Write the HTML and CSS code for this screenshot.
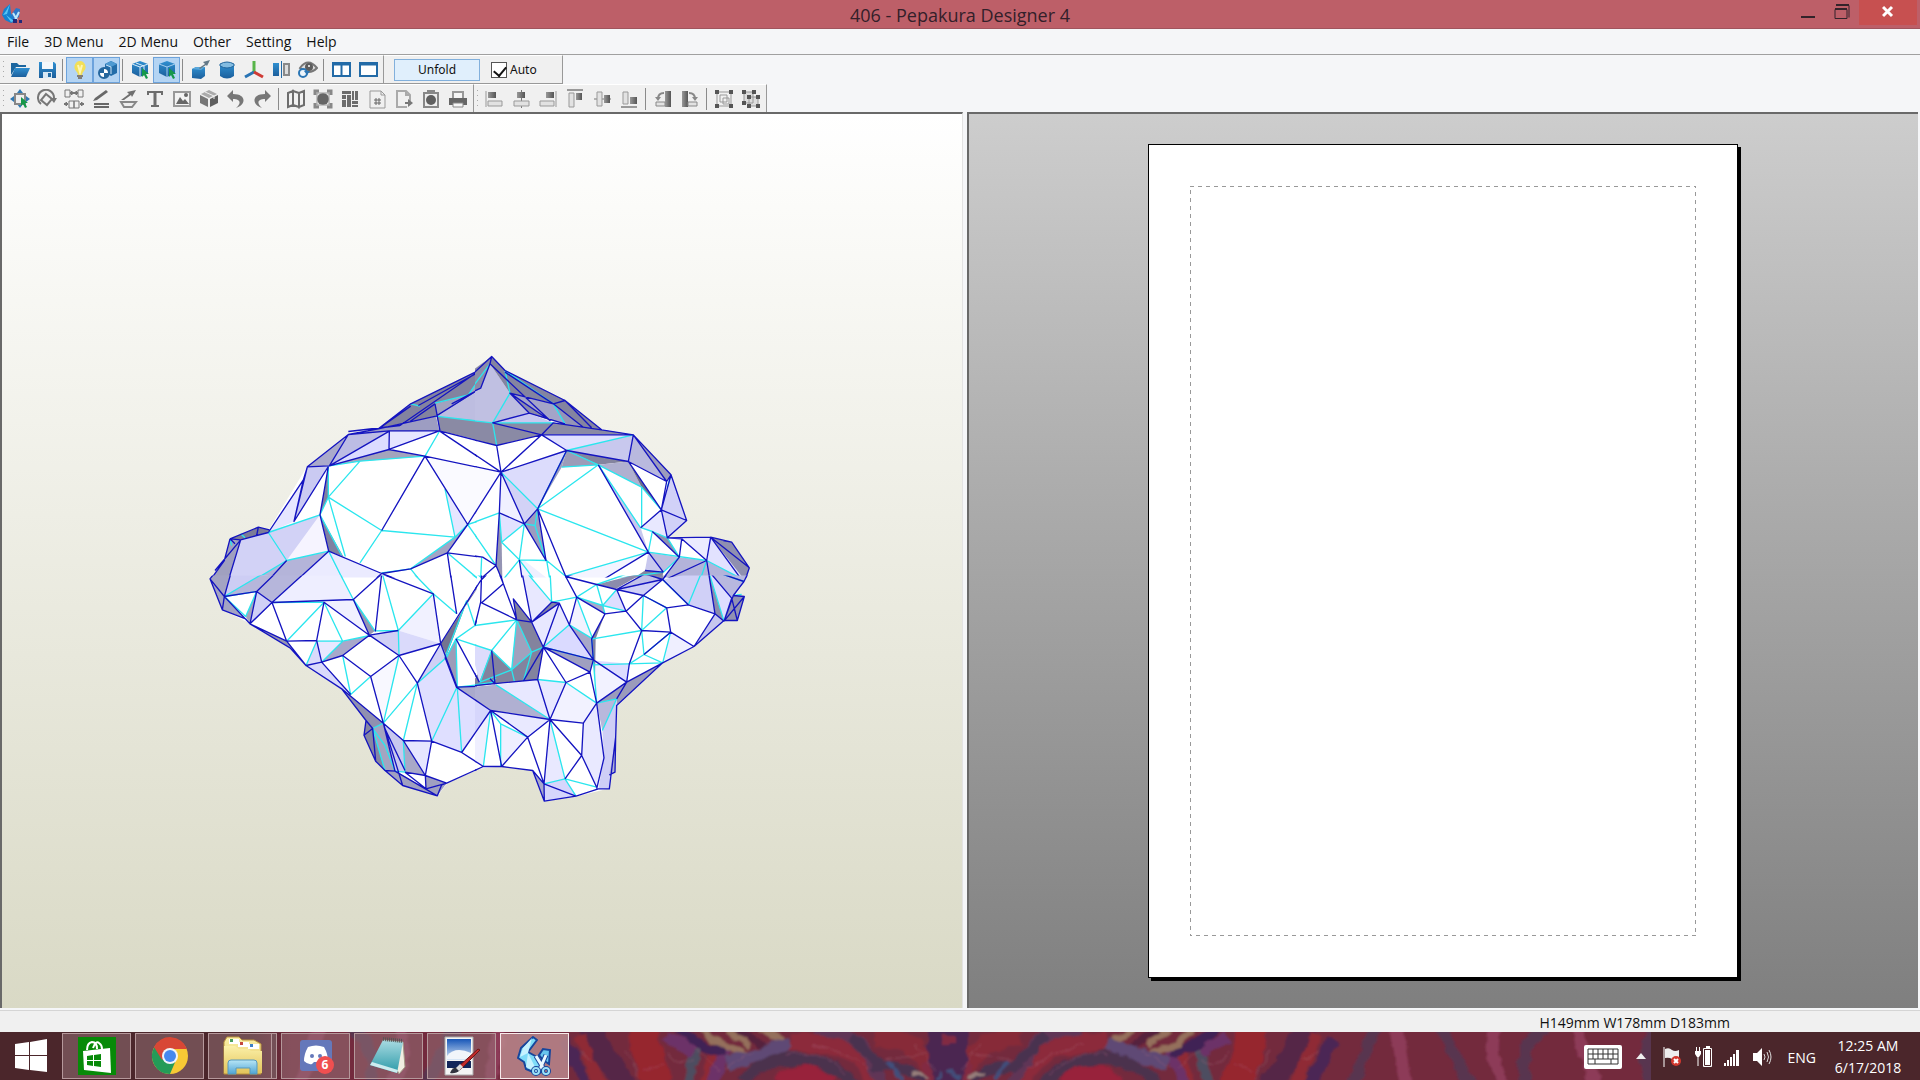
FILE: index.html
```html
<!DOCTYPE html>
<html lang="en">
<head>
  <meta charset="UTF-8" />
  <title>406 - Pepakura Designer 4</title>
  <meta name="viewport" content="width=device-width,initial-scale=1" />
  <link rel="stylesheet" href="styles.css">
</head>
<body>

  <!-- shared gradients and the app logo -->
  <svg class="defs" aria-hidden="true">
    <defs>
      <linearGradient id="blue" x1="0" y1="0" x2="0" y2="1"><stop offset="0" stop-color="#2f8fd0"/><stop offset="1" stop-color="#1c5f9c"/></linearGradient>
      <linearGradient id="gray" x1="0" y1="0" x2="1" y2="0"><stop offset="0" stop-color="#999"/><stop offset="1" stop-color="#555"/></linearGradient>
      <linearGradient id="folder" x1="0" y1="0" x2="0" y2="1"><stop offset="0" stop-color="#fbf0a8"/><stop offset="1" stop-color="#e3c45c"/></linearGradient>
      <linearGradient id="glass" x1="0" y1="0" x2="0" y2="1"><stop offset="0" stop-color="#b8e6f6"/><stop offset="1" stop-color="#4fa4d4"/></linearGradient>
      <linearGradient id="note" x1="0" y1="0" x2="0" y2="1"><stop offset="0" stop-color="#a9dbe2"/><stop offset="1" stop-color="#2c9aa8"/></linearGradient>
      <linearGradient id="sky" x1="0" y1="0" x2="0" y2="1"><stop offset="0" stop-color="#1756b8"/><stop offset="1" stop-color="#dbe9f7"/></linearGradient>
      <symbol id="logo" viewBox="0 0 40 40">
        <path d="M18 1 6 12l-3 10 6 4 2 7 12 5 5-3-6-14-9-5 9-12z" fill="#7edcf8" stroke="#17469c" stroke-width="2" stroke-linejoin="round"/>
        <path d="M17 2 8 12l-3 9 8-4zM13 17l-2 14 12 6z" fill="#c6f3ff"/>
        <path d="m24 19 4-6 7 1-1 14-6-4z" fill="#69c6ee" stroke="#17469c" stroke-width="2"/>
        <path d="m21 20 8 13M31 19l-6 14" stroke="#17469c" stroke-width="5"/>
        <path d="m21 20 8 13M31 19l-6 14" stroke="#eaf8ff" stroke-width="3"/>
        <circle cx="21" cy="35" r="3" fill="none" stroke="#17469c" stroke-width="4"/><circle cx="31" cy="35" r="3" fill="none" stroke="#17469c" stroke-width="4"/>
        <circle cx="21" cy="35" r="3" fill="none" stroke="#9be2f8" stroke-width="2"/><circle cx="31" cy="35" r="3" fill="none" stroke="#9be2f8" stroke-width="2"/>
      </symbol>
      <symbol id="appicon" viewBox="0 0 22 22">
        <path d="M9 1 3 6 1 12l3 5 6 3 5-2-5-7z" fill="#1481d0"/><path d="M9 1 5 8l-3 4 4-1zM5 12l5 7 3-1z" fill="#55c4f4"/>
        <path d="m10 12 5-7 4 1-1 8-5 3z" fill="#2a77c8"/><path d="m12 10 4 7M18 9l-4 8" stroke="#bfe9fa" stroke-width="2"/>
        <path d="M12 16h4v4h-4zM18 17h3v3h-3z" fill="#232a78"/>
      </symbol>
      <symbol id="arrow" viewBox="0 0 8 11"><path d="M0 0v9l2-2 2 4 2-1-2-4h3z" fill="#16984a"/></symbol>
    </defs>
  </svg>

  <header class="titlebar">
    <svg class="title-icon"><use href="#appicon"/></svg>
    <h1 class="title">406 - Pepakura Designer 4</h1>
    <div class="window-buttons">
      <button class="win-btn" aria-label="Minimize"><svg width="14" height="20"><path d="M0 17h14" stroke="#33232a" stroke-width="2"/></svg></button>
      <button class="win-btn" aria-label="Restore"><svg width="16" height="20"><path d="M2 5.500h13v12M1 9.500h12v9H1z" fill="none" stroke="#33232a"/><path d="M2 5h13M1 9h12" stroke="#33232a" stroke-width="2"/></svg></button>
      <button class="win-btn win-close" aria-label="Close"><svg width="12" height="20"><path d="m1 7 9 9M10 7l-9 9" stroke="#fff" stroke-width="3"/></svg></button>
    </div>
  </header>

  <nav class="menubar">
    <button>File</button>
    <button>3D Menu</button>
    <button>2D Menu</button>
    <button>Other</button>
    <button>Setting</button>
    <button>Help</button>
  </nav>

  <div class="toolbars">
    <div class="bar-row">
      <div class="bar">
        <span class="grip"></span>
        <button class="tool" aria-label="Open"><svg><path d="M1 3h6l2 2h7v2H6L1 15z" fill="#1c669f"/><path d="M5 8h15l-4 9H1z" fill="url(#blue)"/></svg></button>
        <button class="tool" aria-label="Save"><svg><path d="M2 2h15l2 2v14H2z" fill="url(#blue)"/><path d="M5 2h11v7H5z" fill="#f4f8fb"/><path d="M6 12h9v6H6z" fill="#d8e8f4"/><path d="M11 13h3v4h-3z" fill="#226aa4"/></svg></button>
        <span class="sep"></span>
        <button class="tool on" aria-label="Light"><svg><path d="M10 1a6 6 0 0 0-4 10q2 2 2 4h4q0-2 2-4a6 6 0 0 0-4-10z" fill="#f2df58"/><path d="M8 5l2 7 2-7" fill="none" stroke="#fdf6b4" stroke-width="2"/><path d="M7 16h6M8 18h4" stroke="#827d78" stroke-width="2"/></svg></button>
        <button class="tool on" aria-label="Texture"><svg><path d="m8 4 6-3 6 3v9l-6 3-6-4z" fill="#236da9"/><path d="m8 4 6-3 6 3-6 3z" fill="#4e9ad2"/><path d="m9 5 5 2v7" fill="none" stroke="#cfe5f6"/><circle cx="7" cy="13" r="5" fill="#fff" stroke="#25679e" stroke-width="2"/><path d="M7 8v5H2a5 5 0 0 1 5-5M7 18v-5h5a5 5 0 0 1-5 5" fill="#25679e"/></svg></button>
        <span class="sep"></span>
        <button class="tool" aria-label="Select"><svg><path d="m10 1 8 3v9l-8 4-8-4V4z" fill="url(#blue)"/><path d="m2 4 8 3 8-3M10 7v10" fill="none" stroke="#dcedf9" stroke-width="1"/><path d="m6 3 8 3v4" stroke="#dcedf9" fill="none"/><use href="#arrow" x="12" y="8" width="8" height="11"/></svg></button>
        <button class="tool on" aria-label="Select face"><svg><path d="m10 1 8 3v9l-8 4-8-4V4z" fill="url(#blue)"/><path d="m2 4 8 3 8-3M10 7v10" fill="none" stroke="#a5cdee" stroke-width="1"/><use href="#arrow" x="12" y="8" width="8" height="11"/></svg></button>
        <span class="sep"></span>
        <button class="tool" aria-label="Move"><svg><path d="m2 9 4-2h9v9l-4 3-9-1z" fill="url(#blue)"/><path d="m2 9 4-2h9l-4 3z" fill="#5aa7da"/><path d="m9 8 6-4-2-2 7-2-3 6-1-1-6 4z" fill="#637988"/></svg></button>
        <button class="tool" aria-label="Cylinder"><svg><path d="M3 4v12q7 5 14 0V4z" fill="url(#blue)"/><path d="M3 4q7-4 14 0v2q-7 4-14 0z" fill="#83bce1" stroke="#21669e"/></svg></button>
        <button class="tool" aria-label="Axes"><svg><path d="M10 1v11" stroke="#58b54a" stroke-width="3"/><path d="m10 12-9 5" stroke="#2873b4" stroke-width="3"/><path d="m10 12 9 5" stroke="#cf3b35" stroke-width="3"/></svg></button>
        <button class="tool" aria-label="Mirror"><svg><path d="M2 3h6v13H2z" fill="url(#blue)"/><path d="M10.500 1v17" stroke="#236ba7"/><path d="M13 4h5v11h-5z" fill="#ddd" stroke="#8a8a8a" stroke-width="2"/></svg></button>
        <button class="tool" aria-label="View"><svg><path d="M2 8q8-11 17 0-8 8-17 0z" fill="#ddd" stroke="#777" stroke-width="2"/><circle cx="11" cy="7" r="4" fill="#5d5d5d"/><circle cx="11" cy="6" r="1" fill="#fff"/><circle cx="5" cy="13" r="4" fill="#eef6fc" stroke="#2b76b5" stroke-width="2"/><path d="m6 11h6l-3 4z" fill="#2b76b5"/></svg></button>
        <span class="sep"></span>
        <button class="tool" aria-label="Two panes"><svg><path d="M2 3h17v13H2zM10.500 3v13" fill="#fff" stroke="#236ba7" stroke-width="2"/><path d="M1 4h19" stroke="#236ba7" stroke-width="3"/></svg></button>
        <button class="tool" aria-label="One pane"><svg><path d="M2 3h17v13H2z" fill="#fff" stroke="#236ba7" stroke-width="2"/><path d="M1 4h19" stroke="#236ba7" stroke-width="3"/></svg></button>
      </div>
      <div class="bar bar-unfold">
        <button class="unfold">Unfold</button>
        <input type="checkbox" id="auto" class="check" checked>
        <label for="auto">Auto</label>
      </div>
    </div>
    <div class="bar-row bar-row-2">
      <div class="bar">
        <span class="grip"></span>
        <button class="tool" aria-label="Select and move"><svg><path d="m10 0 3 4H7zM0 10l4-3v6zM20 10l-4-3v6zM10 19l-3-4h6z" fill="#2e78b3"/><path d="M5 5h10v10H5z" fill="#eee" stroke="#888" stroke-width="2"/><use href="#arrow" x="11" y="8" width="8" height="11"/></svg></button>
        <button class="tool" aria-label="Rotate"><svg fill="none" stroke="#777" stroke-width="2"><path d="M4 15A8 8 0 1 1 17 9"/><path d="m9 5 6 5-5 6-6-5z"/><path d="m13 9 4 5 3-5z" fill="#777" stroke="none"/></svg></button>
        <button class="tool" aria-label="Join"><svg fill="none" stroke="#777"><path d="M1 1h5v7H1zM14 1h5v7h-5zM5 12h5v7H5zM10 12h5v7h-5z"/><path d="M7 4h6M0 15h4M16 15h4" stroke-width="2"/><path d="m8 2-2 2 2 2zM12 2l2 2-2 2zM2 13l2 2-2 2zM18 13l-2 2 2 2z" fill="#777"/></svg></button>
        <button class="tool" aria-label="Edge color"><svg><path d="m2 12 2-3L15 1l2 2L6 11z" fill="#686868"/><path d="M3 15h15M3 18h15" stroke="#686868" stroke-width="2"/></svg></button>
        <button class="tool" aria-label="Flaps"><svg><path d="m3 11 8-6-2-2 9-2-4 7-1-2-7 5z" fill="#6f6f6f"/><path d="M3 13h15l-4 5H6z" fill="#eee" stroke="#888" stroke-width="2"/></svg></button>
        <button class="tool" aria-label="Text"><svg><path d="M3 6V3h14v3M6 17h8" fill="none" stroke="#6d6d6d" stroke-width="2"/><path d="M10 3v14" stroke="#6d6d6d" stroke-width="3"/></svg></button>
        <button class="tool" aria-label="Image"><svg><path d="M2 3h16v14H2z" fill="#f3f3f3" stroke="#999" stroke-width="2"/><path d="m4 15 4-7 3 4 2-2 4 5z" fill="#666"/><circle cx="14" cy="6" r="2" fill="#666"/></svg></button>
        <button class="tool" aria-label="Cube"><svg><path d="m10 1 8 4-8 4-8-4z" fill="#aaa"/><path d="m1 6 8 4v8l-8-4z" fill="#777"/><path d="m19 6-8 4v8l8-4z" fill="#5f5f5f"/><path d="m6 3 9 4v3" fill="none" stroke="#eee"/></svg></button>
        <button class="tool" aria-label="Undo"><svg><path d="m1 7 6-6v4c14 0 13 11 3 14 6-5 4-9-3-9v3z" fill="#777"/></svg></button>
        <button class="tool" aria-label="Redo"><svg><path d="m18 7-6-6v4C-2 5-1 16 9 19c-6-5-4-9 3-9v3z" fill="#777"/></svg></button>
        <span class="sep"></span>
        <button class="tool" aria-label="Unfold map"><svg fill="#f1f1f1" stroke="#6d6d6d" stroke-width="2"><path d="m2 4 5-2v14l-5 2zM7 2l6 2v14l-6-2zM13 4l5-2v14l-5 2z"/></svg></button>
        <button class="tool" aria-label="Fit"><svg><circle cx="10" cy="10" r="6" fill="#666"/><path d="M4 4h12v12H4z" fill="none" stroke="#999"/><path d="M2 6V2h4M14 2h4v4M18 14v4h-4M6 18H2v-4" fill="none" stroke="#888" stroke-width="3"/></svg></button>
        <button class="tool" aria-label="Layout"><svg fill="#6c6c6c"><path d="M2 2h9v3H2zM2 6h4v4H2zM7 6h4v12H7zM12 2h2v9h-2zM15 2h3v9h-3zM2 11h4v7H2zM12 12h6v3h-6zM12 16h6v2h-6z"/></svg></button>
        <button class="tool" aria-label="Number"><svg fill="none" stroke="#999"><path d="M3 2h11l4 4v13H3zM14 2v4h4" stroke-width="1"/><path d="M9 9v7M12 9v7M7 11h7M7 14h7" stroke="#666"/></svg></button>
        <button class="tool" aria-label="Export"><svg><path d="M13 18H3V2h9l4 4v6M12 2v4h4" fill="none" stroke="#aaa" stroke-width="2"/><path d="M11 13h3v-3l5 4-5 4v-3h-3z" fill="#777"/></svg></button>
        <button class="tool" aria-label="Capture"><svg><path d="M3 4h14v14H3z" fill="#eee" stroke="#888" stroke-width="2"/><path d="M6 1h8v4H6z" fill="#888"/><circle cx="10" cy="11" r="5" fill="#5f5f5f"/></svg></button>
        <button class="tool" aria-label="Print"><svg><path d="M5 3h10v7H5z" fill="#f6f6f6" stroke="#999" stroke-width="2"/><path d="M1 9h18v7H1z" fill="#666"/><path d="M5 14h10v4H5z" fill="#f6f6f6" stroke="#888"/></svg></button>
      </div>
      <div class="bar bar-align">
        <span class="grip"></span>
        <button class="tool" aria-label="Align left"><svg><path d="M2 2v16" stroke="#999"/><path d="M4 3h8v6H4z" fill="url(#gray)"/><path d="M4 12h14v5H4z" fill="#e2e2e2" stroke="#999"/></svg></button>
        <button class="tool" aria-label="Align center"><svg><path d="M10.500 1v18" stroke="#777"/><path d="M6 3h8v6H6z" fill="url(#gray)"/><path d="M3 12h15v5H3z" fill="#e2e2e2" stroke="#999"/></svg></button>
        <button class="tool" aria-label="Align right"><svg><path d="M18 2v16" stroke="#999"/><path d="M8 3h8v6H8z" fill="url(#gray)"/><path d="M2 12h14v5H2z" fill="#e2e2e2" stroke="#999"/></svg></button>
        <button class="tool" aria-label="Align top"><svg><path d="M2 1h16" stroke="#999" stroke-width="2"/><path d="M11 4h6v7h-6z" fill="url(#gray)"/><path d="M4 4h5v14H4z" fill="#e2e2e2" stroke="#999"/></svg></button>
        <button class="tool" aria-label="Align middle"><svg><path d="M2 10h17" stroke="#777"/><path d="M12 6h6v8h-6z" fill="url(#gray)"/><path d="M5 3h5v14H5z" fill="#e2e2e2" stroke="#999"/></svg></button>
        <button class="tool" aria-label="Align bottom"><svg><path d="M2 18h16" stroke="#999" stroke-width="2"/><path d="M11 8h7v7h-7z" fill="url(#gray)"/><path d="M4 3h5v12H4z" fill="#e2e2e2" stroke="#999"/></svg></button>
        <span class="sep"></span>
        <button class="tool" aria-label="Rotate left"><svg><path d="M12 2h6v16h-6z" fill="url(#gray)"/><path d="M3 13h9v4H3z" fill="#e2e2e2" stroke="#888"/><path d="M11 4q-6 0-6 6" fill="none" stroke="#888" stroke-width="2"/><path d="M2 8h6l-3 4z" fill="#888"/></svg></button>
        <button class="tool" aria-label="Rotate right"><svg><path d="M2 2h6v16H2z" fill="url(#gray)"/><path d="M8 13h9v4H8z" fill="#e2e2e2" stroke="#888"/><path d="M9 4q6 0 6 6" fill="none" stroke="#888" stroke-width="2"/><path d="M12 8h6l-3 4z" fill="#888"/></svg></button>
        <span class="sep"></span>
        <button class="tool" aria-label="Group"><svg><path d="M3 3h14v14H3zM6 6h7v7H6zM9 9h6v6H9z" fill="none" stroke="#999"/><path d="M1 1h4v4H1zM15 1h4v4h-4zM1 15h4v4H1zM15 15h4v4h-4z" fill="#555"/></svg></button>
        <button class="tool" aria-label="Ungroup"><svg><path d="M3 3h9v11H3zM8 8h9v9H8z" fill="#ddd" stroke="#999"/><path d="M1 1h4v4H1zM11 1h4v4h-4zM1 12h4v4H1zM6 6h4v4H6zM15 6h4v4h-4zM6 15h4v4H6zM15 15h4v4h-4z" fill="#555"/></svg></button>
      </div>
    </div>
  </div>

  <main class="panes">
    <section class="pane pane-3d">
      <svg class="model" viewBox="2 114 960 893" role="img" aria-label="3D model">
        <!-- each quarter of the mesh is kept inside its own quarter, with a small overlap so no seam shows -->
        <clipPath id="clip-ul"><path d="M-90-90H831V711H-90z"/></clipPath>
        <clipPath id="clip-ur"><path d="M15-90H990V711H15z"/></clipPath>
        <clipPath id="clip-ll"><path d="M-90 15H831V900H-90z"/></clipPath>
        <clipPath id="clip-lr"><path d="M15 15H990V900H15z"/></clipPath>

        <path fill="#fff" d="M492 356 505 370 564 399 600 428 634 434 670 474 687 520 668 537 711 537 732 542 749 567 745 581 736 594 745 596 738 620 724 621 694 646 664 662 617 706 613 771 609 788 576 796 544 801 532 770 501 766 480 768 447 783 438 795 403 785 375 760 365 735 367 720 341 688 306 665 290 648 250 623 222 609 211 578 224 560 230 538 258 527 269 529 307 466 348 433 378 428 410 403 480 369z"/>

        <!-- upper left -->
        <g class="part" transform="translate(200 340) scale(.33333)" clip-path="url(#clip-ul)">
          <path fill="#83839f" d="M860 78 632 190 535 265 710 227 860 135z"/>
          <path fill="#a2a2be" d="M705 190 805 163 860 78V135L710 227z"/>
          <path fill="#bdbde0" d="M710 227 860 135V242z"/>
          <path fill="#8a8aa4" d="M710 227 860 242V305L720 271z"/>
          <path fill="#9d9dc2" d="M535 265 708 227 718 271 445 282z"/>
          <path fill="#bcbce4" d="M445 282 568 272 388 376z"/>
          <path fill="#aaaacb" d="M445 282 388 376 322 379z"/>
          <path fill="#e5e5ff" d="M568 272H718L567 327z"/>
          <path fill="#dcdcff" d="M568 272 567 327 388 376z"/>
          <path fill="#a4a4bc" d="M567 327 675 347 480 362 388 376z"/>
          <path fill="#cacaf2" d="M322 379 385 378 282 543z"/>
          <path fill="#8080a0" d="M385 378V470L360 523zM360 523 430 648 386 632z"/>
          <path fill="#e6e6ff" d="M310 418 282 543 205 576zM735 447 803 552 765 590z"/>
          <path fill="#d2d2f6" d="M122 598 205 576 360 523 386 632 260 660 160 720H85z"/>
          <path fill="#f6f4ff" d="M360 523 386 632 260 660z"/>
          <path fill="#b4b4d9" d="M260 660 386 632 290 720H160z"/>
          <path fill="#ebebff" d="M386 632 545 699 540 720H290z"/>
          <path fill="#7c7c98" d="M90 595 175 560 208 568 205 576 122 598z"/>
          <path fill="#a0a0bf" d="M90 595 122 598 85 720H30L73 660z"/>
          <path fill="#fafaff" d="M675 347 840 380V495L803 552 735 445z"/>
          <path fill="#a4a4c4" d="M803 552 742 637 632 685 765 590z"/>
          <path class="cyan" d="M705 188 805 163 870 70M708 227 878 247M718 273 675 347 480 362 388 376M480 362 385 470V378M385 470 545 570 765 590 735 445M385 470 360 523 205 576 260 660 386 632 430 720M160 720 260 660M385 470 436 648M360 523 425 645M545 570 480 667M765 590 632 685 545 697M803 552 840 540M803 552 888 673M765 590 803 552M632 685 660 720M742 637 840 720M122 580 135 592M90 595 95 615M632 190 660 197"/>
          <path d="M860 78 632 190 535 265 445 282 322 379 282 543 385 378 360 523 386 632 545 699 632 685 742 637 803 552 675 347 545 570M845 90 655 195M860 75 600 255M632 197 535 265 708 227 842 143M755 190 840 145M705 190 720 271H568L445 282 388 376 322 379M568 272 567 327 388 376 568 272M718 271 567 327 675 347 903 395M718 271 903 395M718 271 890 315M705 190 630 243M445 273 600 255M310 418 205 576M310 418 282 543M803 552 903 395M742 637 845 650M742 637 754 720M545 699 525 717M545 699 595 718M90 595 175 560 208 568M90 595 122 598 205 576M122 598 85 720M90 595 73 660 30 720M122 598 45 690M175 560 170 585M90 595 105 610M260 660 205 720M386 632 290 720M310 418 322 379"/>
        </g>

        <!-- upper right -->
        <g class="part" transform="translate(470 340) scale(.33333)" clip-path="url(#clip-ur)">
          <path fill="#8c8ca8" d="M0 95 65 48 60 70 32 143 0 155z"/>
          <path fill="#c0c0e2" d="M60 70 120 158 68 247 0 240V155L32 143z"/>
          <path fill="#8484a0" d="M65 48 105 90 120 158 60 70zM105 90 285 180 250 190 120 158zM285 180 395 268 340 260 250 190z"/>
          <path fill="#9595b6" d="M250 190 340 260 285 252z"/>
          <path fill="#a4a4c8" d="M120 158 250 190 285 250 240 240z"/>
          <path fill="#8a8aaa" d="M120 158 178 218 240 240z"/>
          <path fill="#bcbce0" d="M120 158 178 218 68 247z"/>
          <path fill="#c8c8f0" d="M68 247 178 218 250 247z"/>
          <path fill="#8a8aa5" d="M0 240 68 247 250 247 395 268 490 283H215L80 315 0 295z"/>
          <path fill="#e0e0ff" d="M215 283H490L290 330z"/>
          <path fill="#c8c8ee" d="M490 283 475 363 290 330z"/>
          <path fill="#84849e" d="M290 330 475 363 385 373z"/>
          <path fill="#9c9cb8" d="M290 330 385 373 275 380z"/>
          <path fill="#b0b0d0" d="M385 373 475 363 515 440z"/>
          <path fill="#b9b9de" d="M490 283 590 423 475 363z"/>
          <path fill="#9c9cbc" d="M490 283 603 403 590 423z"/>
          <path fill="#6e6e8c" d="M475 363 574 508 515 440z"/>
          <path fill="#d1d1f8" d="M603 403 650 540 592 592 574 508z"/>
          <path fill="#e8e8ff" d="M574 508 592 592 512 562z"/>
          <path fill="#dcdcfc" d="M93 395 290 330 203 505z"/>
          <path fill="#d2d2f6" d="M93 395 203 505 163 550z"/>
          <path fill="#f0f0ff" d="M93 395 163 550 88 517zM148 658 163 660 240 720H155z"/>
          <path fill="#fafaff" d="M93 395 0 545V375z"/>
          <path fill="#9c9cc0" d="M290 330 275 380 203 505zM203 505 228 660 163 550z"/>
          <path fill="#9494b4" d="M88 517 95 605 97 720 78 675z"/>
          <path fill="#e2e2ff" d="M88 517 163 550 95 605zM722 590 825 720 710 660z"/>
          <path fill="#c8c8ee" d="M385 373 512 562 535 635zM535 635 580 695 525 690z"/>
          <path fill="#9090b0" d="M547 573 592 592 628 650z"/>
          <path fill="#ebebff" d="M635 595 722 590 710 660z"/>
          <path fill="#8f8fb0" d="M722 590 785 605 838 682 825 720z"/>
          <path fill="#bcbce0" d="M535 635 628 650 580 695z"/>
          <path fill="#b3b3da" d="M628 650 710 660 825 720H575z"/>
          <path fill="#f4f4ff" d="M535 635 395 720 287 707z"/>
          <path fill="#84849e" d="M525 690 580 695 575 720H480z"/>
          <path class="cyan" d="M0 150 60 70M105 90 120 158 68 247 80 315M105 90 250 190 285 250M0 240 68 247H250M290 330 490 283M290 330 385 373 275 380M385 373 515 440V562L547 573 535 635 287 707 230 660 148 658 195 720M385 373 203 505 535 635 710 660 825 720M93 395 203 505M203 505 195 555 163 550 95 605 148 658 97 720M-7 552 88 517 95 605M-7 552 78 675M163 550 148 658M230 660 240 720M547 573 592 592 628 650M385 373 512 562M603 403 592 440M574 508 515 440M628 650 580 695 400 720M710 660 690 720M35 650 32 715M195 555 228 660M290 330 203 505"/>
          <path d="M0 108 65 48 105 90 285 180 395 268 490 283 603 403 650 540 592 592 722 590 785 605 838 682 825 720M65 48 60 70 32 143 0 158M60 70 240 240 120 158 178 218 68 247 215 283 250 247 395 268M120 158 250 190 285 180 365 262M250 190 340 260M105 95 250 190M178 218 285 250M215 283H490L475 363 290 330 215 283 93 395 80 315 215 283M80 315 0 295M93 395-92 271M93 395-10 373M93 395-7 552M93 395 88 517 78 675 97 720M93 395 163 550 88 517M93 395 290 330 203 505 163 550 228 660 203 505 287 707M385 373 535 635 580 695M475 363 590 423 574 508 475 363M490 283 590 423 603 403 574 508 650 540M574 508 592 592M574 508 512 562M547 573 628 650 635 595 592 592M635 595 710 660 722 590 838 682M722 590 815 718M785 605 760 600M148 658 157 720M78 675 38 650 0 645M78 675 32 715M710 660 720 720M710 660 580 720M628 650 575 720M535 635 395 720M525 690 580 695M287 707 290 720"/>
        </g>

        <!-- lower left -->
        <g class="part" transform="translate(200 570) scale(.33333)" clip-path="url(#clip-ll)">
          <path fill="#a3a3c3" d="M30 25 50 0H95L73 78 137 145 67 118z"/>
          <path fill="#cdcdf4" d="M95 0H235L73 78z"/>
          <path fill="#b6b6db" d="M73 78 205 0H322L216 96 170 63z"/>
          <path fill="#eeeeff" d="M322 0H415L460 87 216 96z"/>
          <path fill="#d0d0f6" d="M170 63 216 96 150 160z"/>
          <path fill="#a4a4bc" d="M170 63 150 160 137 138z"/>
          <path fill="#f1f1ff" d="M372 95 460 87 508 194zM700 70 722 219 595 180z"/>
          <path fill="#9696b0" d="M460 87 525 181 508 194zM150 160 260 212 318 285 270 230z"/>
          <path fill="#dadafb" d="M350 210 318 285 365 275zM318 285 365 275 452 372 425 355zM595 180 722 219 597 255z"/>
          <path fill="#e8e8ff" d="M350 210H428L365 275z"/>
          <path fill="#a8a8ca" d="M428 212 510 195 428 255 365 275z"/>
          <path fill="#d0d0f5" d="M508 194 595 180 597 255zM722 219 740 260 652 338z"/>
          <path fill="#f8f8ff" d="M512 318 597 255 550 458z"/>
          <path fill="#dfdfff" d="M652 338 740 260 770 352 840 400V460L785 546 695 512z"/>
          <path fill="#aaaacc" d="M770 350 840 345V398z"/>
          <path fill="#747490" d="M722 219 838 45 800 95 740 255z"/>
          <path fill="#9c9cb8" d="M768 205 740 255 722 219 772 352z"/>
          <path fill="#9090b0" d="M425 355 550 458 518 474 498 450z"/>
          <path fill="#8686a2" d="M498 450 518 474 555 600 527 572 492 494z"/>
          <path fill="#a4a4c0" d="M518 474 550 458 585 602 555 600z"/>
          <path fill="#c8c8ee" d="M550 458 610 510 615 605 585 602z"/>
          <path fill="#a8a8c8" d="M610 510 676 615 615 605z"/>
          <path fill="#e6e6ff" d="M610 510H695L676 615z"/>
          <path fill="#a0a0c0" d="M555 600 590 603 678 655 676 615 740 638 712 676 608 645z"/>
          <path class="cyan" d="M415 0 460 87M205 0 73 78 170 63 137 138 73 78M372 95 260 212M216 96 372 95 428 212H350L318 285M428 212 365 275M460 87 525 181 595 180 547 10M595 180 700 70 632 0M700 70 770 130M595 180 597 255 550 458 652 338 610 510 615 605M428 255 452 372 512 318M652 338 740 260 768 205 825 165M768 205 772 352 785 546M770 352 695 512M800 90 735 260M768 205 875 240M800 90 825 165M842 30 800 0M550 458 518 474 555 600M518 474 555 525 585 602 615 605M428 212 510 195M772 350 840 342"/>
          <path d="M50 0 30 25 67 118 137 145 150 160 270 232 318 285 425 355 498 450 492 494 527 572 555 600 608 645 712 676 725 643 740 638 850 588M95 0 73 78 30 25M73 78 67 118M73 78 150 160 170 63 73 78M170 63 235 0M170 63 216 96 322 0M216 96 460 87 545 10 700 70 722 219 597 255 512 318 428 255 365 275 318 285 260 212 350 210 372 95M216 96 260 212 150 160M216 96 150 160M350 210 365 275 452 372M372 95 508 194 460 87M545 10 526 183M508 194 595 180M508 194 597 255 652 338 722 219 842 30M508 194 428 255M512 318 550 458 425 355M652 338 695 512 610 510 550 458M695 512 785 546 872 420M785 546 850 588M695 512 676 615 610 510M722 219 772 352 872 420M770 352 735 260M772 350 840 347M768 205 838 335M770 130 750 0M825 165 845 97M550 458 608 645M550 458 585 602 555 600M585 602 712 676M615 605 676 615 740 638 678 655 676 615M498 450 518 474 492 494M518 474 527 572M555 475 615 600M615 605 678 655"/>
        </g>

        <!-- lower right -->
        <g class="part" transform="translate(470 570) scale(.33333)" clip-path="url(#clip-lr)">
          <path fill="#83839e" d="M130 85 185 155 220 230 203 327 75 340 0 350 65 240 125 298 140 148z"/>
          <path fill="#a1a1bd" d="M140 148 185 245 125 298z"/>
          <path fill="#dcdcfc" d="M0 220 65 240 28 335z"/>
          <path fill="#b0b0d2" d="M0 350 78 343 240 447 62 420 0 378z"/>
          <path fill="#e8e8ff" d="M78 343 203 327 288 336 240 447zM185 155 268 98 298 163 220 230zM155 0H165L245 95 185 155z"/>
          <path fill="#a0a0c0" d="M220 230 370 268 360 305z"/>
          <path fill="#dadaff" d="M220 230 298 163 370 268z"/>
          <path fill="#8484a4" d="M185 155 245 95 268 98z"/>
          <path fill="#f2f2ff" d="M298 163 320 80 368 205zM370 270 470 335 380 398zM288 336 380 398 340 458 240 447z"/>
          <path fill="#a8a8c8" d="M298 163 368 205 370 268zM320 80 398 105 405 130z"/>
          <path fill="#8080a0" d="M405 130 377 205 375 330 380 398 365 205z"/>
          <path fill="#dcdcff" d="M370 270 478 280 470 335z"/>
          <path fill="#9b9bbb" d="M470 335 578 277 440 405V385L380 398z"/>
          <path fill="#b8b8dc" d="M380 398 440 385 397 480z"/>
          <path fill="#cfcff6" d="M440 385 437 500 418 655H385L402 562 397 480z"/>
          <path fill="#b0b0d4" d="M437 500 435 605 418 613z"/>
          <path fill="#e9e9ff" d="M380 398 402 562 380 650 335 555 340 458zM240 447 285 625 222 640zM62 420 240 447 173 500z"/>
          <path fill="#d6d6fc" d="M222 640 285 625 318 677 223 692zM0 378 62 420 0 508z"/>
          <path fill="#a8a8cc" d="M188 600 222 640 223 692z"/>
          <path fill="#efefff" d="M92 460 173 500 95 588zM62 420 40 588 0 565V508zM602 185 672 228 578 277z"/>
          <path fill="#c6c6ee" d="M735 130 762 152 672 228z"/>
          <path fill="#d0d0f7" d="M578 27 700 0H715L735 130 655 103zM440 57 578 27 520 75z"/>
          <path fill="#8c8cac" d="M715 0 762 152 735 130zM380 42 525 5 438 55zM490 0H585L578 27 525 10z"/>
          <path fill="#dedeff" d="M715 0 785 83 762 152zM440 57 398 105 468 122z"/>
          <path fill="#b8b8df" d="M715 0H838L822 33 785 83z"/>
          <path fill="#9292b2" d="M790 75 823 78 802 150 762 152z"/>
          <path fill="#c0c0e8" d="M438 55 525 10 578 27z"/>
          <path class="cyan" d="M165 0 245 95 320 80 368 205 298 163 220 230 370 268 380 398 288 336 203 327M240 0 245 95M320 80 398 105 468 122M320 80 380 42 398 105 440 57M380 42 500 0M520 75 515 180 590 112 520 75M515 180 368 205M515 180 522 252 578 277 602 185 522 252 478 280M370 283 578 277M578 27 655 103 697 0M715 0 762 152M725 0 822 33M-42 205 15 165 140 148 65 240-42 205M140 148 185 245 125 298 30 335 65 240 125 298 140 148M185 245 220 230M185 245 160 332M125 298 133 332M78 343 240 447 285 625 222 640M78 322 60 342M62 420 40 588M62 420 92 460 173 500M92 460V588M285 625 380 650M285 625 318 677M380 398 440 385 397 480M0 345 75 335M-10 90 15 165M0-7 35 22M365 205 370 268 375 330M398 105 405 130M790 75 815 72"/>
          <path d="M838 0 822 33 790 75 823 78 802 150H762L672 228 578 277 440 405 437 500 418 655H385L318 677 223 692 188 600 95 588H40L-70 638M78-15 32 30-88 219M35 0 32 95 15 165M78-15 100 40 140 148 185 155 155 0M100 40 35 97 140 148M100 40 88 0M140 148 130 85 185 155 268 98 220 230 185 155 245 95 268 98 298 163 370 268 360 305 220 230 370 268 470 335 380 398 402 562 380 655M220 230 203 327-38 350M203 327 240 447 173 500 62 420 95 588 173 500 222 640 240 447 62 420-38 352M220 230 160 332M220 230 288 336 360 305 380 398 340 458 240 447 288 336M240 447 335 555 340 458M335 555 380 650M335 555 285 625M222 640 318 677M222 640 223 692M188 600 222 640M62 420-25 546 40 588M65 240 75 340 60 325M298 163 320 80 405 130 468 122 515 180 478 280 470 335 578 277M405 130 365 205 370 268M515 180 602 185 672 228M602 185 590 112 655 103 735 130 672 228M602 185 522 252M590 112 520 75 440 57 468 122 520 75 578 27 655 103M290 0 287 18 380 42 440 57 578 27 600 0M287 18 320 80M287 18 350 0M440 57 525 10 578 27M715 0 735 130 762 152 785 83 715 0M725 0 822 33M785 83 802 150M790 75 762 152 823 78M437 500 435 605 418 613M-42 205 28 335M470 335 440 385"/>
        </g>
      </svg>
    </section>
    <section class="pane pane-2d">
      <div class="sheet"><svg class="margin"><rect width="100%" height="100%"/></svg></div>
    </section>
  </main>

  <footer class="status"><span>H149mm W178mm D183mm</span></footer>

  <div class="taskbar">
    <svg class="wallpaper" viewBox="0 0 1920 48" preserveAspectRatio="xMidYMid slice" aria-hidden="true">
      <defs>
        <filter id="paint" x="0" y="0" width="100%" height="100%">
          <feTurbulence type="fractalNoise" baseFrequency=".06 .08" numOctaves="3" seed="4" result="n"/>
          <feDisplacementMap in="SourceGraphic" in2="n" scale="9" xChannelSelector="R" yChannelSelector="G"/>
          <feGaussianBlur stdDeviation="1"/>
        </filter>
        <g id="half">
          <path fill="#732a3d" d="M200-10h749v70H200z"/>
          <g fill="none" stroke-width="12">
            <path stroke="#583450" d="M240-5q20 30 0 60M350-5q30 20 20 60M455-5l-30 60M520-5l25 60"/>
            <path stroke="#8d3a58" d="M300 55 320-5M400-5q10 30-10 60M490 55 500-5"/>
            <path stroke="#542647" stroke-width="22" d="M590-5 602 20 628 55"/>
            <path stroke="#4b2554" stroke-width="12" d="M563 8 588 55"/>
            <path stroke="#96252f" stroke-width="30" d="M645-5q-2 30 18 60"/>
            <path stroke="#8f2a34" stroke-width="12" d="M580 4l21 50M718 15l-14 40"/>
            <path stroke="#4e4e60" stroke-width="10" d="M697 15 688 55"/>
            <path stroke="#6c3368" d="M668 5l27 14M710 55l16-38"/>
            <path stroke="#412154" stroke-width="10" d="M680-3q20 20 46 23"/>
            <path stroke="#94705c" stroke-width="7" d="M703-3q15 18 42 25M727-3l22 17M762-3l25 14"/>
            <path stroke="#55203c" stroke-width="7" d="M737-3l28 18"/>
            <path stroke="#5e4a74" stroke-width="14" d="M728 32 790 12"/>
            <path stroke="#4c304d" stroke-width="12" d="M742 50q15-20 50-24 40-2 62 30"/>
            <path stroke="#98223a" stroke-width="18" d="M779 53q25-22 52 0"/>
            <path stroke="#8c2a3a" stroke-width="18" d="M790 10q76-2 85 45"/>
            <path stroke="#613656" d="M815-3q48 3 56 33l14 25"/>
            <path stroke="#872a37" stroke-width="20" d="M875 4q38 2 57 30"/>
            <path stroke="#493150" stroke-width="10" d="M873 32q50 6 55 22M850 4l35 32"/>
            <path stroke="#4c2851" stroke-width="26" d="M941-5v60"/>
            <path stroke="#434f7c" stroke-width="4" d="M888 30l15 18M937 46l10-8"/>
            <path stroke="#822a42" stroke-width="8" d="M926 30l5 25M942 8h12"/>
            <path stroke="#98807c" stroke-width="3" d="M910 42l10-2 8 7"/>
          </g>
          <g fill="none" stroke="#ad6680" opacity=".4">
            <path d="M578 20l16 8M626 18l15 30M667 20q9 18 27 8M694 14l25 24M725 35l28-15M788 24q33-10 59 20M812 12q40 10 56 25M884 28l42-6M915 12l20 26M643 40l20-10"/>
          </g>
        </g>
      </defs>
      <g filter="url(#paint)">
        <use href="#half"/>
        <use href="#half" transform="translate(1896 0) scale(-1 1)"/>
      </g>
    </svg>
    <button class="start" aria-label="Start"><svg width="32" height="34"><path d="m0 5 14-2v13H0zM15 3 32 0v16H15zM0 17h14v14L0 29zM15 17h17v16l-17-2z" fill="#fff"/></svg></button>
    <div class="apps">
      <button class="app" aria-label="Store"><svg viewBox="0 0 40 40"><path d="M1 1h38v38H1z" fill="#078a08"/><path d="m6 15 27-3 1 25-27-3z" fill="#fff"/><path d="M10 14q0-7 5-8 5 0 5 7M16 12q3-8 6-5 3 2 3 6" fill="none" stroke="#fff" stroke-width="2"/><path d="m10 20 6-1v5h-6zM17 19l7-1v6h-7zM10 25h6v5l-6-1zM17 25h7v6l-7-1z" fill="#078a08"/></svg></button>
      <button class="app" aria-label="Chrome"><svg viewBox="0 0 40 40"><circle cx="20" cy="20" r="18" fill="#f7c935"/><path d="M20 20 5 10A18 18 0 0 0 20 38l6-14z" fill="#249b58"/><path d="M4 11A18 18 0 0 1 37 13H20l-8 11z" fill="#d84735"/><circle cx="20" cy="20" r="8" fill="#f1f4f8"/><circle cx="20" cy="20" r="6" fill="#4688ee"/></svg></button>
      <button class="app stacked" aria-label="File Explorer"><svg viewBox="0 0 40 40"><path d="M1 6 4 1h12l3 3h12l7 4v30H1z" fill="url(#folder)" stroke="#b9923d"/><path d="M6 3h10v5H6zM15 6h11v5H15zM25 8h11v5H25z" fill="#fff"/><path d="M7 3h3v3H7z" fill="#4b9e5c"/><path d="M17 6h3v3h-3z" fill="#c4483d"/><path d="M27 8h3v3h-3z" fill="#3d7fc4"/><path d="M1 10h11l4 3h9l3 2h11v22H1z" fill="url(#folder)"/><path d="M5 38V27q0-3 3-3h23q3 0 3 3v11h-7v-6H13v6z" fill="url(#glass)" stroke="#5799bd"/></svg></button>
      <button class="app" aria-label="Discord"><svg viewBox="0 0 40 40"><rect x="4" y="4" width="32" height="31" rx="3" fill="#6578ba"/><path d="M12 11q8-3 16 0 4 7 4 14-4 4-8 3l-2-2h-4l-2 2q-4 1-8-3 0-7 4-14z" fill="#fff"/><circle cx="16" cy="20" r="2" fill="#6578ba"/><circle cx="24" cy="20" r="2" fill="#6578ba"/></svg><span class="badge">6</span></button>
      <button class="app" aria-label="Notepad"><svg viewBox="0 0 40 40"><path d="m14 4 20 2 2 25-6 7z" fill="#f1eee2" stroke="#a49b87"/><path d="m14 4 20 2-6 31L1 29z" fill="url(#note)"/><path d="m14 3 20 2" stroke="#555" stroke-width="4" stroke-dasharray="1 1"/><path d="m1 29 27 8 1-3L3 26z" fill="#cdecef"/></svg></button>
      <button class="app" aria-label="Paint"><svg viewBox="0 0 40 40"><path d="M3 1h28v38H3z" fill="#f4f4f4" stroke="#aaa"/><path d="M5 3h24v21H5z" fill="url(#sky)"/><path d="M5 20q8-10 24-3v6H5z" fill="#f1f5fa"/><path d="M5 25h24v7H5z" fill="#14265a"/><path d="m16 31 20-18 2 1-20 20z" fill="#c42b2b" stroke="#6d1717"/><path d="M8 37q2-6 8-6l2 3q-4 4-10 3z" fill="#32343f"/><path d="m14 32 4-4 3 3-4 4z" fill="#ddd"/></svg></button>
      <button class="app active" aria-label="Pepakura Designer"><svg><use href="#logo"/></svg></button>
    </div>
    <button class="keyboard" aria-label="Touch keyboard"><svg width="38" height="24"><rect width="38" height="24" rx="2" fill="#fff"/><path d="M4 4h30v15H4zM4 9h30M4 14h30M9 4v10M14 4v10M19 4v10M24 4v10M29 4v10M11 14v5M27 14v5" fill="none" stroke="#333"/></svg></button>
    <button class="more" aria-label="Show hidden icons"><svg width="10" height="6"><path d="m0 6 5-6 5 6z" fill="#eee"/></svg></button>
    <div class="tray">
      <svg width="20" height="22"><path d="M2 1v20" stroke="#fff" stroke-width="1"/><path d="M3 3q4-2 7 1 3 2 7 0v9q-4 2-7 0-3-2-7-1z" fill="#eee"/><circle cx="14" cy="15" r="5" fill="#d3382e"/><path d="m12 13 4 4M16 13l-4 4" stroke="#fff" stroke-width="2"/></svg>
      <svg width="18" height="22"><path d="M2.500 1v4M5.500 1v4M4 9v11" stroke="#fff" stroke-width="1"/><path d="M1 5h6v3L5 11H3L1 8z" fill="#fff"/><path d="M10 4h7v16h-7z" fill="#fff"/><path d="M9.500 2.500h8v18h-8z" fill="none" stroke="#fff"/><path d="M10.500 3.500h6v16h-6z" fill="none" stroke="#4b262b"/><path d="M12 0h4v2h-4z" fill="#fff"/></svg>
      <svg width="16" height="22"><path d="M0 17h2v3H0zM3 14h2v6H3zM6 11h2v9H6zM9 8h2v12H9zM12 4h3v16h-3z" fill="#fff"/></svg>
      <svg width="20" height="22"><path d="M1 7h4l5-5v18l-5-5H1z" fill="#fff"/><path d="M12 8q2 3 0 6M15 6q3 5 0 10M17 4q4 7 0 14" fill="none" stroke="#ddd"/></svg>
      <span class="lang">ENG</span>
      <time class="clock">12:25 AM<br>6/17/2018</time>
    </div>
  </div>

</body>
</html>
```
FILE: styles.css
```css
* {
    box-sizing: border-box;
}

body {
    margin: 0;
    height: 100vh;
    display: flex;
    flex-direction: column;
    overflow: hidden;
    background-color: #f5f6f8;
    font-family: "Open Sans", "Noto Sans", sans-serif;
    font-size: 14px;
    color: #111;
}

button {
    border: 0;
    padding: 0;
    margin: 0;
    background: none;
    color: inherit;
    font: inherit;
}

svg {
    display: block;
}

.defs {
    position: absolute;
    width: 0;
    height: 0;
}

/* title bar: the side columns are equal so the title stays centered */
.titlebar {
    display: grid;
    grid-template-columns: 1fr auto 1fr;
    height: 29px;
    background-color: #bd5f68;
    border-bottom: 1px solid #a0545d;
}

.title-icon {
    width: 22px;
    height: 22px;
    margin: 3px 0 0 1px;
}

.title {
    margin: 0;
    font-size: 18px;
    font-weight: normal;
    line-height: 30px;
    color: #33202a;
}

.window-buttons {
    display: flex;
    justify-content: flex-end;
    padding-right: 3px;
}

.win-btn {
    display: flex;
    justify-content: center;
    width: 34px;
    height: 25px;
}

.win-close {
    width: 58px;
    background-color: #c75050;
}

/* menu */
.menubar {
    display: flex;
    gap: 15px;
    height: 26px;
    padding-left: 7px;
    border-bottom: 1px solid #a0a0a0;
    line-height: 25px;
}

/* toolbars */
.toolbars {
    flex: none;
}

.bar-row {
    display: flex;
    height: 29px;
}

.bar-row-2 {
    height: 28px;
}

.bar {
    display: flex;
    align-items: center;
    padding-right: 2px;
    background-color: #f0f0f0;
    border-top: 1px solid #fff;
    border-right: 1px solid #999;
    border-bottom: 1px solid #999;
}

.bar-row-2 .bar {
    padding-top: 1px;
    border-bottom: 0;
}

.grip {
    width: 3px;
    height: 22px;
    margin: 0 1px 0 2px;
    background-image: radial-gradient(circle, #aaa 1px, transparent 1px);
    background-size: 3px 5px;
}

.sep {
    width: 1px;
    height: 22px;
    margin: 0 3px 0 2px;
    background-color: #8a8a8a;
}

.tool {
    display: flex;
    align-items: center;
    justify-content: center;
    width: 27px;
    height: 26px;
}

.tool svg {
    width: 20px;
    height: 20px;
}

.on {
    background-color: #b4d4f3;
    border: 1px solid #6da3dc;
}

.bar-unfold {
    width: 179px;
    padding-left: 10px;
    font-family: "Noto Sans", sans-serif;
    font-size: 12px;
}

.unfold {
    width: 86px;
    height: 22px;
    margin-right: 11px;
    background-color: #e0effc;
    border: 1px solid #82b0dc;
}

.check {
    appearance: none;
    width: 16px;
    height: 16px;
    margin: 0 3px 0 0;
    border: 1px solid #555;
    background-color: #fff;
}

.check:checked::before {
    content: "";
    display: block;
    width: 6px;
    height: 10px;
    margin: 1px 0 0 4px;
    border: solid #111;
    border-width: 0 2px 2px 0;
    transform: rotate(40deg);
}

.bar-align .sep {
    margin: 0 3px;
}

/* work area */
.panes {
    flex: 1;
    min-height: 0;
    display: grid;
    grid-template-columns: 963fr 951fr;
    gap: 4px;
    padding-right: 2px;
}

.pane {
    min-width: 0;
    min-height: 0;
    border: solid #696969;
    border-width: 2px 0 0 2px;
}

.pane-3d {
    background-image: linear-gradient(#fff, #d9d9c5);
    border-right: 1px solid #e3e3e3;
}

.pane-2d {
    display: flex;
    justify-content: center;
    padding: 30px 2px 30px 0;
    background-image: linear-gradient(#cdcdcd, #7f7f7f);
}

.model {
    width: 100%;
    height: 100%;
}

.part path {
    stroke: none;
}

.part path:not([fill]) {
    fill: none;
    stroke: #1414c0;
    stroke-width: 4;
    stroke-linejoin: round;
}

.part .cyan:not([fill]) {
    stroke: #2be6ee;
}

.sheet {
    height: 100%;
    aspect-ratio: 590 / 834;
    padding: 41px;
    background-color: #fff;
    border: 1px solid #000;
    box-shadow: 3px 3px 0 #000;
}

.margin {
    width: 100%;
    height: 100%;
}

.margin rect {
    fill: none;
    stroke: #999;
    stroke-width: 2;
    stroke-dasharray: 4 4;
}

.status {
    display: flex;
    justify-content: flex-end;
    height: 22px;
    margin-top: 2px;
    padding-right: 190px;
    background-color: #f0f0f0;
    border-top: 1px solid #d5d5d5;
    line-height: 23px;
}

/* taskbar */
.taskbar {
    position: relative;
    display: flex;
    height: 48px;
    background-color: #4b262b;
    color: #fff;
}

/* the desktop picture shows through behind everything */
.wallpaper {
    position: absolute;
    inset: 0;
    width: 100%;
    height: 100%;
}

.start,
.apps,
.keyboard,
.more,
.tray {
    position: relative;
}

.start {
    display: flex;
    align-items: center;
    justify-content: center;
    width: 62px;
    background-color: #4b262b;
}

.apps {
    display: flex;
    gap: 4px;
    flex: 1;
    padding: 1px 0;
    background-image: linear-gradient(90deg, #4b262b 190px, transparent 230px);
}

.app {
    position: relative;
    display: flex;
    align-items: center;
    justify-content: center;
    width: 69px;
    background-color: #9a757b80;
    border: 1px solid #b5989b;
}

.app svg {
    width: 40px;
    height: 40px;
}

.stacked {
    box-shadow: inset -4px 0 0 #745057, inset -5px 0 0 #b5989b;
}

.active {
    background-color: #b9868bdd;
    border-color: #f7e9ea;
}

.badge {
    position: absolute;
    right: 15px;
    bottom: 4px;
    width: 18px;
    height: 18px;
    border-radius: 9px;
    background-color: #f04f50;
    font-size: 12px;
    font-weight: bold;
    line-height: 18px;
    text-align: center;
}

.keyboard,
.more {
    display: flex;
    align-items: center;
    justify-content: center;
}

.keyboard {
    width: 40px;
    padding-top: 2px;
}

.more {
    width: 20px;
    margin-left: 8px;
}

.tray {
    display: flex;
    align-items: center;
    gap: 12px;
    padding: 2px 16px 0 11px;
    background-color: #4b262b;
}

.lang {
    margin-left: 4px;
}

.clock {
    width: 72px;
    margin-left: 4px;
    line-height: 22px;
    text-align: center;
}
```
